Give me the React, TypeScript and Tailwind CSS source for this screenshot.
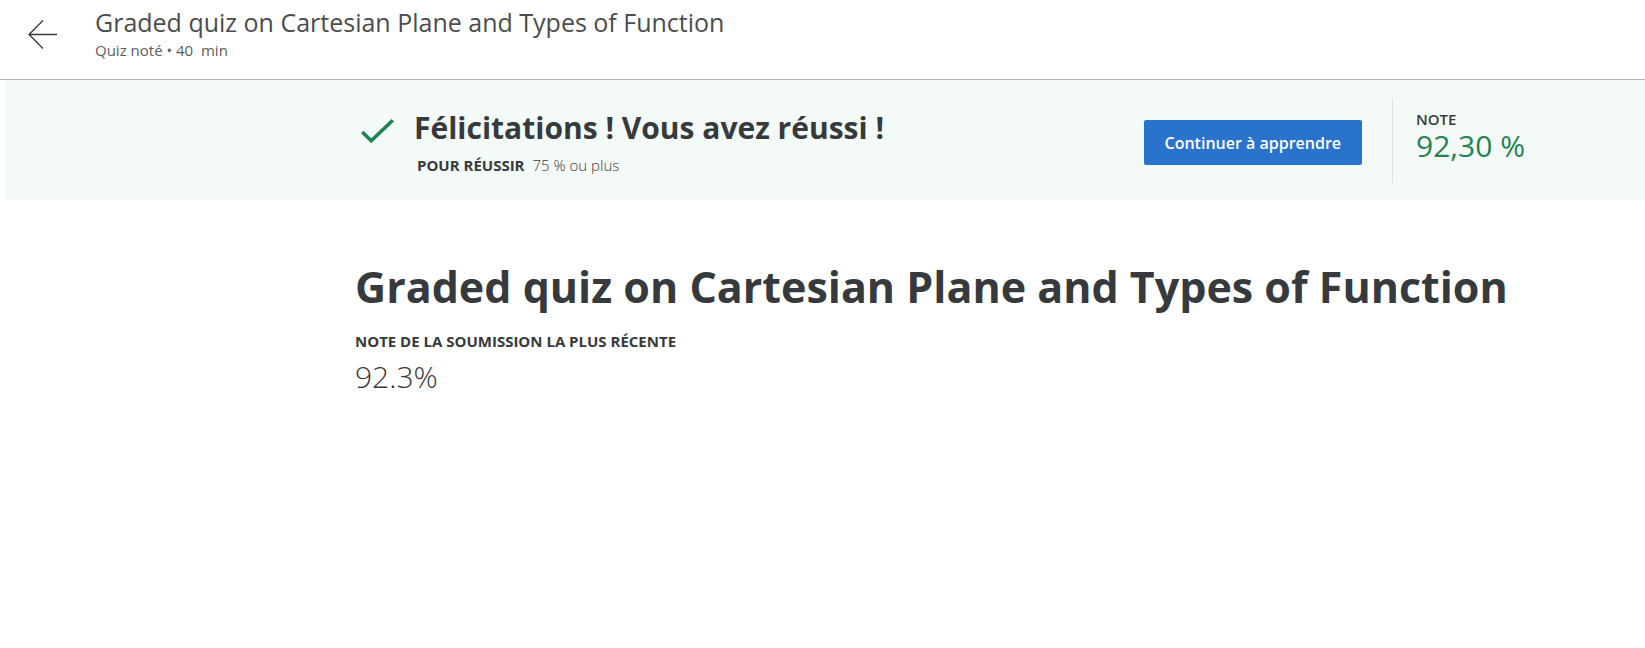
export default function App() {
  return (
    <div className="min-h-screen bg-white font-['Open_Sans',sans-serif] text-[#373a3c]">
      <header className="flex items-start border-b border-[#b4b7b7] pb-[18px] pl-7">
        <a href="#back" aria-label="Retour" className="mt-5 shrink-0">
          <svg width="30" height="30" viewBox="0 0 30 30" fill="none" stroke="#373a3c" strokeWidth="1.3">
            <path d="M15 0.5L1 14.5L15 28.5M1 14.5H29" />
          </svg>
        </a>
        <div className="ml-[37px] pt-[5px]">
          <p className="text-[25px] leading-[34px] text-[#4a4d4f]">Graded quiz on Cartesian Plane and Types of Function</p>
          <p className="text-[15px] leading-[22px] whitespace-pre text-[#5b5e60]">Quiz noté • 40  min</p>
        </div>
      </header>

      <section className="ml-[5px] flex h-[120px] items-start bg-[#f4faf8] pr-[120px] pl-[355px]">
        <svg className="mt-[38px] shrink-0" width="36" height="28" viewBox="0 0 36 28" fill="none" stroke="#1f8354" strokeWidth="3.6">
          <path d="M2.3 14L11.2 22.7L32.8 2.3" />
        </svg>
        <div className="ml-[18px] grow pt-7">
          <h2 className="text-[30px] leading-10 font-bold">Félicitations ! Vous avez réussi !</h2>
          <p className="mt-[5px] ml-[3px] flex gap-2 text-[15px] leading-6">
            <strong className="font-bold">POUR RÉUSSIR</strong>
            <span className="font-light">75 % ou plus</span>
          </p>
        </div>
        <button type="button" className="mt-10 h-[45px] shrink-0 rounded-xs bg-[#2a73cc] px-[21px] text-base font-semibold text-white">
          Continuer à apprendre
        </button>
        <div className="mt-[18px] ml-[30px] h-[85px] shrink-0 border-l border-[#dfe1e1] pt-[11px] pl-[23px]">
          <p className="text-[15px] leading-5 font-semibold">NOTE</p>
          <p className="text-[30px] leading-[34px] text-[#1f8354]">92,30 %</p>
        </div>
      </section>

      <main className="pt-[57px] pr-8 pl-[355px]">
        <h1 className="text-[43px] leading-[60px] font-bold">Graded quiz on Cartesian Plane and Types of Function</h1>
        <p className="mt-3 text-[15px] leading-6 font-bold">NOTE DE LA SOUMISSION LA PLUS RÉCENTE</p>
        <p className="mt-1 text-[30px] leading-10 font-light">92.3%</p>
      </main>
    </div>
  );
}
